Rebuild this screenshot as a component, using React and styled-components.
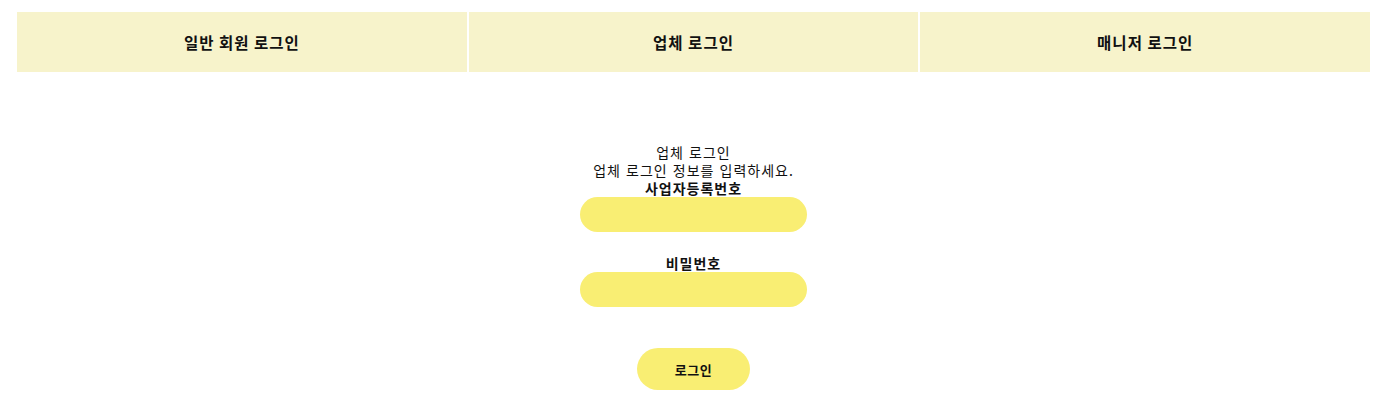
import styled, { createGlobalStyle } from "styled-components";

const tabColor = "#f7f3cb";
const fieldColor = "#f9ee73";

const GlobalStyle = createGlobalStyle`
  body {
    margin: 8px;
    background: #ffffff;
    color: #111111;
    font-family: "Noto Sans CJK KR", "Noto Sans", sans-serif;
  }
`;

const Page = styled.div`
  padding: 4px 15px 0 9px;
`;

const TabBar = styled.div`
  display: grid;
  grid-template-columns: repeat(3, 1fr);
  gap: 2px;
`;

const Tab = styled.button`
  height: 60px;
  border: none;
  background: ${tabColor};
  font-family: inherit;
  font-size: 15.5px;
  font-weight: 700;
  letter-spacing: 1px;
  color: #111111;
  cursor: pointer;
`;

const Form = styled.form`
  display: flex;
  flex-direction: column;
  align-items: center;
  padding-top: 71px;
  text-align: center;
`;

const Line = styled.div`
  font-size: 14px;
  font-weight: ${(p) => (p.$bold ? 700 : 400)};
  line-height: 18px;
  letter-spacing: 1px;
  word-spacing: ${(p) => (p.$bold ? "0" : "1px")};
`;

const Field = styled.div`
  display: flex;
  flex-direction: column;
  align-items: center;
  margin-top: ${(p) => p.$gap || "0"};
`;

const Input = styled.input`
  width: 227px;
  height: 35px;
  box-sizing: border-box;
  border: none;
  border-radius: 18px;
  background: ${fieldColor};
  outline: none;
  padding: 0 16px;
  font-family: inherit;
`;

const Submit = styled.button`
  margin-top: 41px;
  width: 113px;
  height: 42px;
  border: none;
  border-radius: 21px;
  background: ${fieldColor};
  font-family: inherit;
  font-size: 13px;
  font-weight: 700;
  letter-spacing: 0.5px;
  color: #111111;
  cursor: pointer;
`;

const tabs = ["일반 회원 로그인", "업체 로그인", "매니저 로그인"];

const App = () => {
  return (
    <Page>
      <GlobalStyle />
      <TabBar>
        {tabs.map((t) => (
          <Tab key={t} type="button">
            {t}
          </Tab>
        ))}
      </TabBar>
      <Form onSubmit={(e) => e.preventDefault()}>
        <Line>업체 로그인</Line>
        <Line>업체 로그인 정보를 입력하세요.</Line>
        <Field>
          <Line $bold>사업자등록번호</Line>
          <Input type="text" />
        </Field>
        <Field $gap="22px">
          <Line $bold>비밀번호</Line>
          <Input type="password" />
        </Field>
        <Submit type="submit">로그인</Submit>
      </Form>
    </Page>
  );
};

export default App;
